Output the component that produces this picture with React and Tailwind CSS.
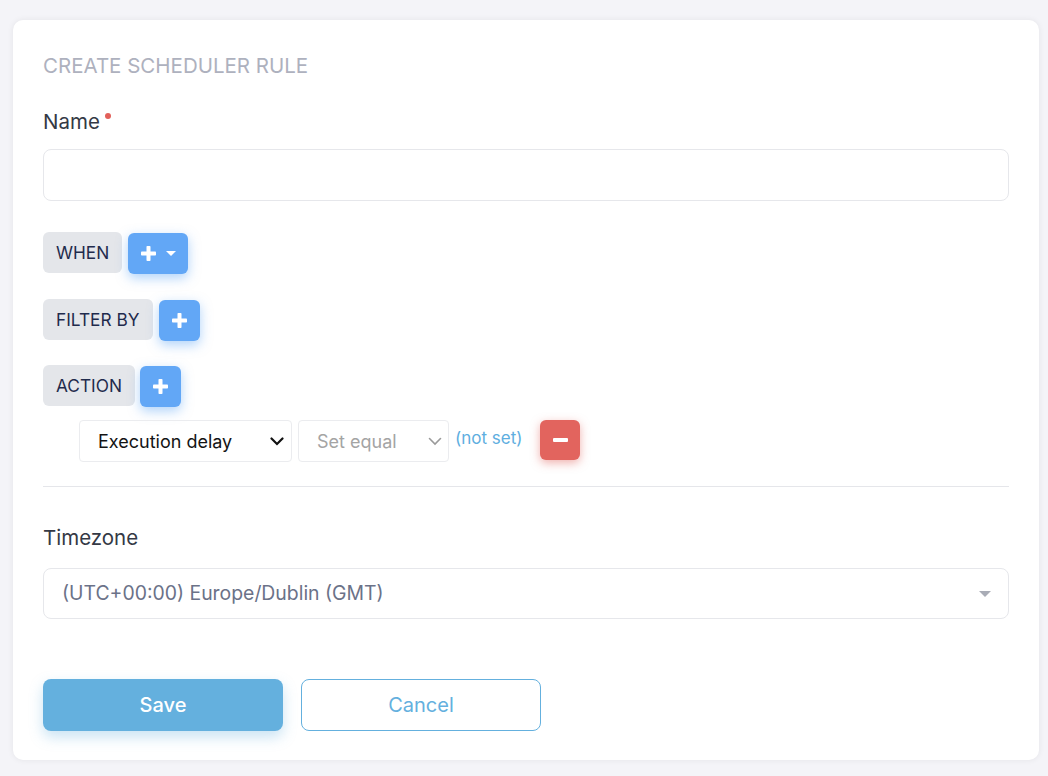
import React from "react";

function Plus() {
  return (
    <svg width="15" height="15" viewBox="0 0 15 15">
      <rect x="5.5" y="0" width="4" height="15" rx="0.8" fill="white" />
      <rect x="0" y="5.5" width="15" height="4" rx="0.8" fill="white" />
    </svg>
  );
}

function Chip({ children }) {
  return (
    <div className="h-[41px] px-[13px] flex items-center rounded-md bg-[#e4e6ea] text-[#1f2b4d] text-[17.3px]">
      {children}
    </div>
  );
}

function Chevron({ color, width }) {
  return (
    <svg width="14" height="9" viewBox="0 0 14 9">
      <path d="M1.5 1.5 L7 7 L12.5 1.5" stroke={color} strokeWidth={width} fill="none" strokeLinecap="round" />
    </svg>
  );
}

export default function App() {
  return (
    <div className="min-h-[776px] bg-[#f4f4f8] pt-[20px] px-[13px] pb-4 font-['Inter',_'Open_Sans',_sans-serif]">
      <div className="w-[1026px] h-[740px] bg-white rounded-[10px] shadow-[0_0_6px_rgba(0,0,0,0.07)] px-[30px] pt-[32px]">
        <div className="text-[20.5px] leading-[27px] text-[#aeb1be]">CREATE SCHEDULER RULE</div>

        <div className="mt-[29px] flex items-start text-[20.5px] leading-[28px] text-[#343945]">
          Name
          <span className="ml-[5px] mt-[5px] w-[6px] h-[6px] rounded-full bg-[#e2605a]" />
        </div>
        <div className="mt-[13px] h-[52px] w-full rounded-lg border border-[#e6e7eb] bg-white" />

        <div className="mt-[31px] flex items-start gap-[6px]">
          <Chip>WHEN</Chip>
          <button className="mt-[1px] h-[41px] w-[60px] flex items-center justify-center gap-[10px] rounded-md bg-[#62a7f6] shadow-[0_4px_12px_rgba(98,167,246,0.5)]">
            <Plus />
            <svg width="10" height="5" viewBox="0 0 10 5">
              <path d="M0 0 L10 0 L5 5 Z" fill="white" />
            </svg>
          </button>
        </div>
        <div className="mt-[25px] flex items-start gap-[6px]">
          <Chip>FILTER BY</Chip>
          <button className="mt-[1px] h-[41px] w-[41px] flex items-center justify-center rounded-md bg-[#62a7f6] shadow-[0_4px_12px_rgba(98,167,246,0.5)]">
            <Plus />
          </button>
        </div>
        <div className="mt-[24px] flex items-start gap-[5px]">
          <Chip>ACTION</Chip>
          <button className="mt-[1px] h-[41px] w-[41px] flex items-center justify-center rounded-md bg-[#62a7f6] shadow-[0_4px_12px_rgba(98,167,246,0.5)]">
            <Plus />
          </button>
        </div>

        <div className="mt-[13px] ml-[36px] flex items-start">
          <div className="w-[213px] h-[42px] rounded border border-[#ebecef] flex items-center justify-between pl-[18px] pr-[7px] text-[18px] text-[#141414]">
            Execution delay
            <Chevron color="#111" width="2.2" />
          </div>
          <div className="ml-[6px] w-[151px] h-[42px] rounded border border-[#ebecef] flex items-center justify-between pl-[18px] pr-[6px] text-[18px] text-[#a4a4a4]">
            Set equal
            <Chevron color="#9a9a9a" width="1.6" />
          </div>
          <div className="ml-[6px] mt-[6px] text-[17px] leading-[24px] text-[#5eaee0]">(not set)</div>
          <button className="ml-[18px] w-[40px] h-[40px] rounded-md bg-[#e2645e] flex items-center justify-center shadow-[0_3px_10px_rgba(226,100,94,0.5)]">
            <span className="block w-[15px] h-[4px] rounded-[1px] bg-white" />
          </button>
        </div>

        <div className="mt-[24px] w-full h-px bg-[#e5e6ea]" />

        <div className="mt-[37px] text-[20.5px] leading-[28px] text-[#343945]">Timezone</div>
        <div className="mt-[16px] w-full h-[51px] rounded-lg border border-[#e6e7eb] flex items-center justify-between pl-[18px] pr-[17px] text-[19.4px] text-[#6b7288]">
          (UTC+00:00) Europe/Dublin (GMT)
          <svg width="12" height="6" viewBox="0 0 12 6">
            <path d="M0 0 L12 0 L6 6 Z" fill="#a9acb6" />
          </svg>
        </div>

        <div className="mt-[60px] flex gap-[18px]">
          <button className="w-[240px] h-[52px] rounded-lg bg-[#64b0de] text-white text-[20px] font-medium shadow-[0_6px_14px_rgba(100,176,222,0.35)]">
            Save
          </button>
          <button className="w-[240px] h-[52px] rounded-lg border border-[#64b0de] bg-white text-[#64b0de] text-[20px]">
            Cancel
          </button>
        </div>
      </div>
    </div>
  );
}
